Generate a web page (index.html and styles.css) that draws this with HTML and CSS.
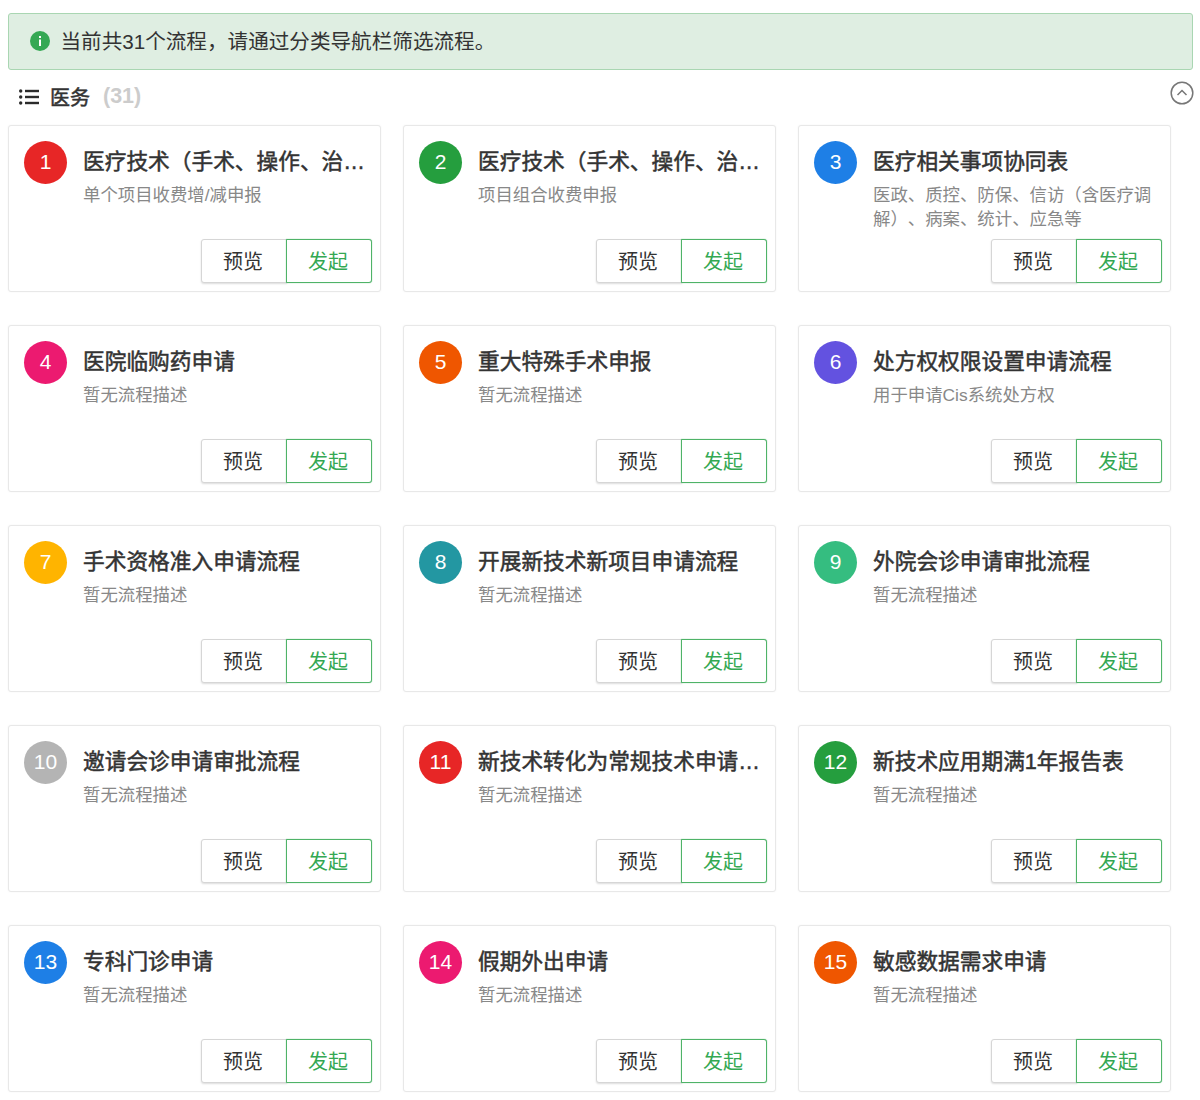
FILE: index.html
```html
<!DOCTYPE html>
<html lang="zh-CN">
<head>
<meta charset="utf-8">
<title>医务</title>
<link rel="stylesheet" href="styles.css">
</head>
<body>
<div class="banner">
  <svg class="info" viewBox="0 0 20 20" width="20" height="20"><circle cx="10" cy="10" r="10" fill="#34a853"/><rect x="9" y="5" width="2" height="2" fill="#fff"/><rect x="9" y="8.5" width="2" height="6.5" fill="#fff"/></svg>
  <span>当前共31个流程，请通过分类导航栏筛选流程。</span>
</div>
<div class="section">
  <svg class="list" viewBox="0 0 20 16" width="20" height="16"><g fill="#2b2b2b"><circle cx="1.7" cy="2" r="1.7"/><circle cx="1.7" cy="8" r="1.7"/><circle cx="1.7" cy="14" r="1.7"/><rect x="6" y="0.8" width="14" height="2.4"/><rect x="6" y="6.8" width="14" height="2.4"/><rect x="6" y="12.8" width="14" height="2.4"/></g></svg>
  <span class="section-name">医务</span>
  <span class="section-count">(31)</span>
  <svg class="collapse" viewBox="0 0 24 24" width="24" height="24"><circle cx="12" cy="12" r="10.8" fill="none" stroke="#777" stroke-width="1.5"/><path d="M7.5 14 12 9.5 16.500 14" fill="none" stroke="#777" stroke-width="1.500"/></svg>
</div>
<div class="grid">
  <div class="card"><div class="top"><div class="num red">1</div><div class="body"><div class="title">医疗技术（手术、操作、治疗）新增收费项目申请</div><div class="desc">单个项目收费增/减申报</div></div></div><div class="actions"><button class="btn">预览</button><button class="btn go">发起</button></div></div>
  <div class="card"><div class="top"><div class="num green">2</div><div class="body"><div class="title">医疗技术（手术、操作、治疗）新增收费项目申请</div><div class="desc">项目组合收费申报</div></div></div><div class="actions"><button class="btn">预览</button><button class="btn go">发起</button></div></div>
  <div class="card"><div class="top"><div class="num blue">3</div><div class="body"><div class="title">医疗相关事项协同表</div><div class="desc">医政、质控、防保、信访（含医疗调解）、病案、统计、应急等</div></div></div><div class="actions"><button class="btn">预览</button><button class="btn go">发起</button></div></div>
  <div class="card"><div class="top"><div class="num pink">4</div><div class="body"><div class="title">医院临购药申请</div><div class="desc">暂无流程描述</div></div></div><div class="actions"><button class="btn">预览</button><button class="btn go">发起</button></div></div>
  <div class="card"><div class="top"><div class="num orange">5</div><div class="body"><div class="title">重大特殊手术申报</div><div class="desc">暂无流程描述</div></div></div><div class="actions"><button class="btn">预览</button><button class="btn go">发起</button></div></div>
  <div class="card"><div class="top"><div class="num violet">6</div><div class="body"><div class="title">处方权权限设置申请流程</div><div class="desc">用于申请Cis系统处方权</div></div></div><div class="actions"><button class="btn">预览</button><button class="btn go">发起</button></div></div>
  <div class="card"><div class="top"><div class="num amber">7</div><div class="body"><div class="title">手术资格准入申请流程</div><div class="desc">暂无流程描述</div></div></div><div class="actions"><button class="btn">预览</button><button class="btn go">发起</button></div></div>
  <div class="card"><div class="top"><div class="num teal">8</div><div class="body"><div class="title">开展新技术新项目申请流程</div><div class="desc">暂无流程描述</div></div></div><div class="actions"><button class="btn">预览</button><button class="btn go">发起</button></div></div>
  <div class="card"><div class="top"><div class="num mint">9</div><div class="body"><div class="title">外院会诊申请审批流程</div><div class="desc">暂无流程描述</div></div></div><div class="actions"><button class="btn">预览</button><button class="btn go">发起</button></div></div>
  <div class="card"><div class="top"><div class="num grey">10</div><div class="body"><div class="title">邀请会诊申请审批流程</div><div class="desc">暂无流程描述</div></div></div><div class="actions"><button class="btn">预览</button><button class="btn go">发起</button></div></div>
  <div class="card"><div class="top"><div class="num red">11</div><div class="body"><div class="title">新技术转化为常规技术申请审批流程</div><div class="desc">暂无流程描述</div></div></div><div class="actions"><button class="btn">预览</button><button class="btn go">发起</button></div></div>
  <div class="card"><div class="top"><div class="num green">12</div><div class="body"><div class="title">新技术应用期满1年报告表</div><div class="desc">暂无流程描述</div></div></div><div class="actions"><button class="btn">预览</button><button class="btn go">发起</button></div></div>
  <div class="card"><div class="top"><div class="num blue">13</div><div class="body"><div class="title">专科门诊申请</div><div class="desc">暂无流程描述</div></div></div><div class="actions"><button class="btn">预览</button><button class="btn go">发起</button></div></div>
  <div class="card"><div class="top"><div class="num pink">14</div><div class="body"><div class="title">假期外出申请</div><div class="desc">暂无流程描述</div></div></div><div class="actions"><button class="btn">预览</button><button class="btn go">发起</button></div></div>
  <div class="card"><div class="top"><div class="num orange">15</div><div class="body"><div class="title">敏感数据需求申请</div><div class="desc">暂无流程描述</div></div></div><div class="actions"><button class="btn">预览</button><button class="btn go">发起</button></div></div>
</div>
</body>
</html>
```
FILE: styles.css
```css
* { box-sizing: border-box; }
html, body { margin: 0; height: 1100px; overflow: hidden; }
body {
  padding: 13px 8px 0;
  background: #fff;
  font-family: "Liberation Sans", "Noto Sans CJK SC", sans-serif;
  color: #2b2b2b;
  text-spacing-trim: space-all;
}
.banner {
  display: flex;
  align-items: center;
  height: 57px;
  margin-left: -0.5px;
  margin-right: -0.5px;
  padding-left: 21px;
  background: #dfeee2;
  border: 1px solid #a9d6b2;
  border-radius: 3px;
  font-size: 20.6px;
  color: #333;
}
.banner span { margin-top: -3px; }
.info { margin-top: -1px; margin-right: 11px; flex: none; }
.section {
  display: flex;
  align-items: center;
  height: 55px;
  padding: 0 0 2px 11px;
}
.list { margin-right: 11px; flex: none; }
.section-name { font-size: 20px; color: #333; -webkit-text-stroke: 0.5px #333; }
.section-count { margin-left: 13px; font-size: 21.5px; font-weight: 700; color: #ccc; }
.collapse { margin-left: auto; margin-right: -2px; margin-top: -8px; flex: none; }
.grid {
  display: grid;
  grid-template-columns: repeat(3, 373px);
  grid-auto-rows: 167px;
  column-gap: 22px;
  row-gap: 33px;
}
.card {
  display: flex;
  flex-direction: column;
  justify-content: space-between;
  padding: 15px 8px 8px 15px;
  background: #fff;
  border: 1px solid #e8e8e8;
  border-radius: 3px;
  box-shadow: 0 0 2px rgba(0, 0, 0, .05);
}
.top { display: flex; gap: 16px; min-width: 0; }
.num {
  flex: none;
  width: 43px;
  height: 43px;
  padding-bottom: 1px;
  border-radius: 50%;
  display: flex;
  align-items: center;
  justify-content: center;
  color: #fff;
  font-size: 21px;
}
.red { background: #e72626; }
.green { background: #259e3e; }
.blue { background: #1e7fe6; }
.pink { background: #ec1a70; }
.orange { background: #ef5600; }
.violet { background: #6352e0; }
.amber { background: #ffb400; }
.teal { background: #2397a2; }
.mint { background: #35bd80; }
.grey { background: #b4b4b4; }
.body { min-width: 0; width: 283px; }
.title {
  height: 32px;
  margin-top: 5px;
  line-height: 32px;
  font-size: 21.7px;
  color: #333;
  -webkit-text-stroke: 0.5px #333;
  white-space: nowrap;
  overflow: hidden;
  text-overflow: ellipsis;
}
.desc {
  margin-top: 5px;
  line-height: 24px;
  font-size: 17.4px;
  color: #888;
}
.actions { display: flex; justify-content: flex-end; }
.btn {
  width: 86px;
  height: 44px;
  padding: 0 2px 2px 0;
  background: #fff;
  border: 1px solid #d6d6d6;
  border-radius: 3px 0 0 3px;
  box-shadow: 0 1px 2px rgba(0, 0, 0, .14);
  font: inherit;
  font-size: 20px;
  color: #333;
}
.btn.go {
  margin-left: -1px;
  border: 1px solid #4fb368;
  border-radius: 0 3px 3px 0;
  box-shadow: 0 0 1px #4fb368;
  color: #34a853;
}
```
